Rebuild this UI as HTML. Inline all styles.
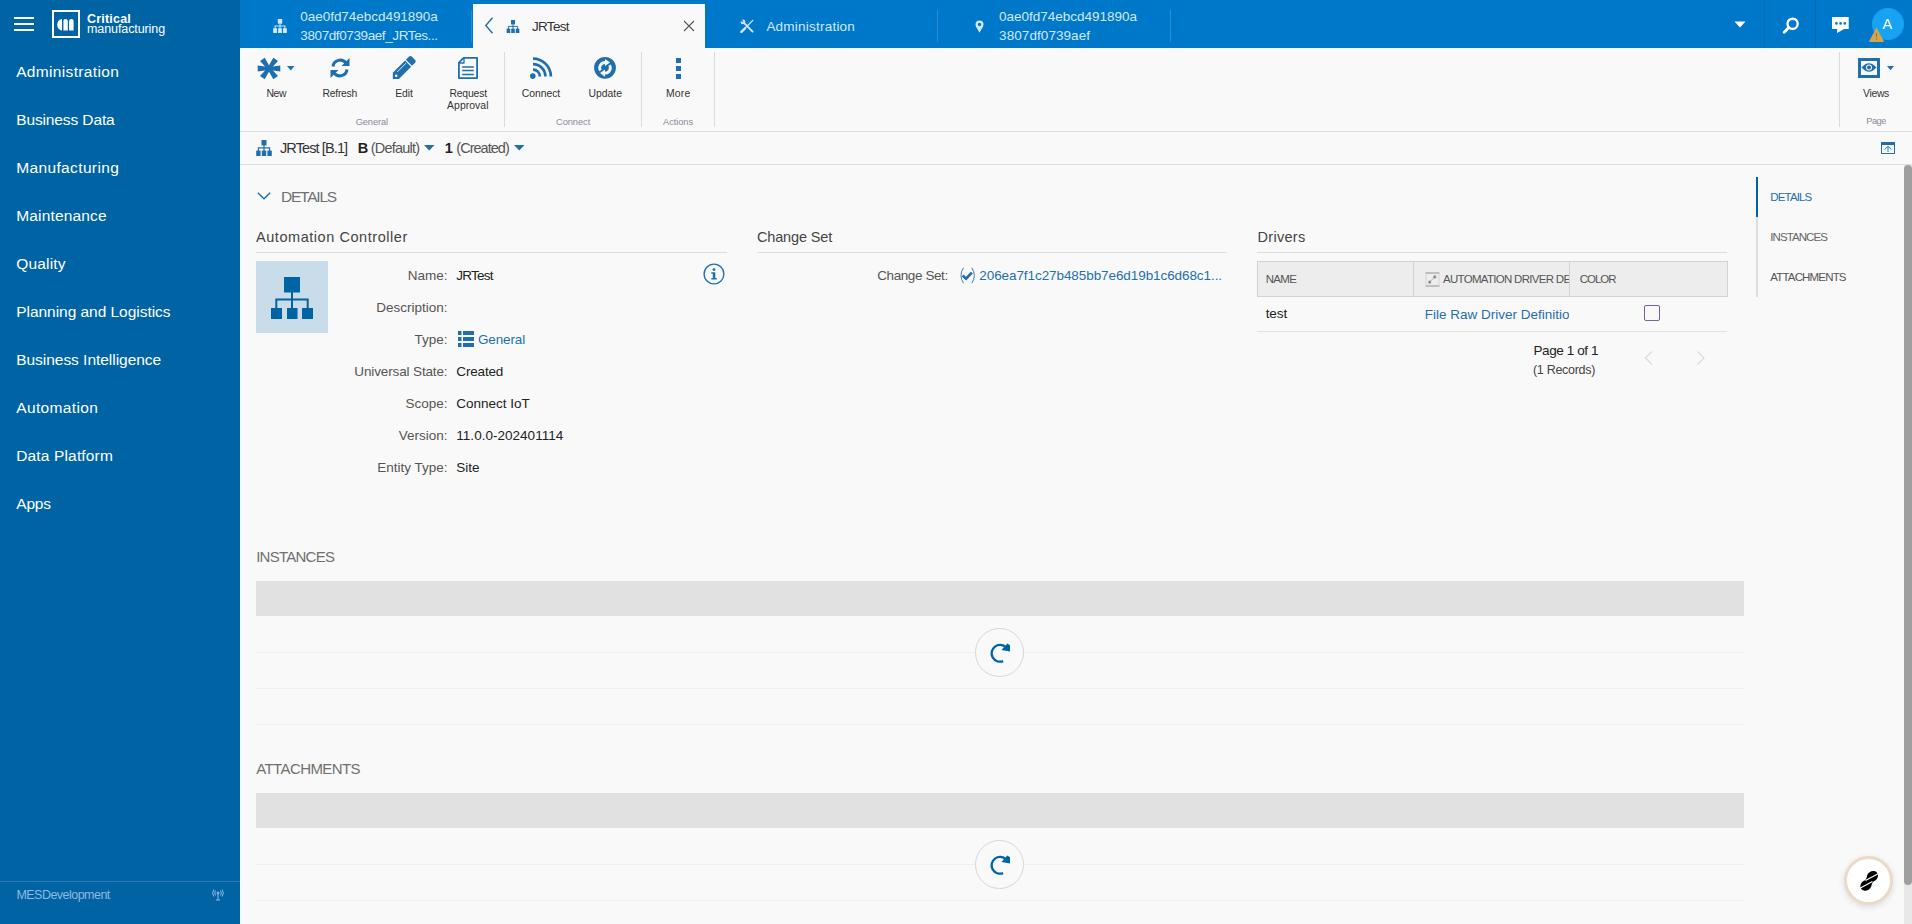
<!DOCTYPE html><html><head><meta charset="utf-8"><style>html,body{margin:0;padding:0;width:1912px;height:924px;overflow:hidden;background:#f9f9f9;font-family:"Liberation Sans",sans-serif;}.t{position:absolute;white-space:nowrap;}</style></head><body><div style="position:absolute;left:0;top:0;width:240px;height:924px;background:#0064a4"></div><div style="position:absolute;left:14px;top:17px;width:20px;height:2px;background:#fff"></div><div style="position:absolute;left:14px;top:23px;width:20px;height:2px;background:#fff"></div><div style="position:absolute;left:14px;top:29px;width:20px;height:2px;background:#fff"></div><div style="position:absolute;left:52px;top:10px;width:24px;height:24px;border:2px solid #fff"></div><svg style="position:absolute;left:57px;top:18.5px" width="17" height="12" viewBox="0 0 17 12"><path d="M5 0 A4.8 5.75 0 0 0 5 11.5 Z" fill="#fff"/><path d="M6.4 11.5 V2 A2.2 2 0 0 1 10.8 2 V11.5 Z" fill="#fff"/><path d="M12.1 11.5 V2 A2.25 2 0 0 1 16.6 2 V11.5 Z" fill="#fff"/></svg><div style="position:absolute;left:0;top:881px;width:240px;height:1px;background:#2a7bb6"></div><svg style="position:absolute;left:212px;top:889px" width="12" height="12" viewBox="0 0 12 12" fill="none" stroke="#8fb9de" stroke-width="1"><path d="M6 4 L6 11 M4 11 L8 11"/><circle cx="6" cy="4" r="1" fill="#8fb9de"/><path d="M3.5 1.5 Q2 4 3.5 6.5 M8.5 1.5 Q10 4 8.5 6.5 M1.8 0.5 Q-0.5 4 1.8 7.5 M10.2 0.5 Q12.5 4 10.2 7.5"/></svg><div style="position:absolute;left:240px;top:0;width:1672px;height:48px;background:#0078c9"></div><svg style="position:absolute;left:273px;top:19px" width="14" height="14" viewBox="0 0 16 16"><rect x="5.5" y="0" width="5" height="5.4" fill="#d2e8f8"/><path d="M8 5 V11 M2.4 11 V7.9 H13.6 V11" stroke="#d2e8f8" stroke-width="1.2" fill="none"/><rect x="0.2" y="10.6" width="4.4" height="5.4" fill="#d2e8f8"/><rect x="5.8" y="10.6" width="4.4" height="5.4" fill="#d2e8f8"/><rect x="11.4" y="10.6" width="4.4" height="5.4" fill="#d2e8f8"/></svg><div style="position:absolute;left:471px;top:10px;width:1px;height:32px;background:#2a8fd2"></div><div style="position:absolute;left:473px;top:4px;width:232px;height:44px;background:#f9f9f9"></div><svg style="position:absolute;left:484px;top:17px" width="10" height="17" viewBox="0 0 10 17"><path d="M8.5 0.8 L1.8 8.5 L8.5 16.2" stroke="#1f6fae" stroke-width="1.4" fill="none"/></svg><svg style="position:absolute;left:506px;top:19.5px" width="14" height="13" viewBox="0 0 16 16"><rect x="5.5" y="0" width="5" height="5.4" fill="#1f6fae"/><path d="M8 5 V11 M2.4 11 V7.9 H13.6 V11" stroke="#1f6fae" stroke-width="1.2" fill="none"/><rect x="0.2" y="10.6" width="4.4" height="5.4" fill="#1f6fae"/><rect x="5.8" y="10.6" width="4.4" height="5.4" fill="#1f6fae"/><rect x="11.4" y="10.6" width="4.4" height="5.4" fill="#1f6fae"/></svg><svg style="position:absolute;left:683px;top:20px" width="12" height="12" viewBox="0 0 12 12"><path d="M1 1 L11 11 M11 1 L1 11" stroke="#555" stroke-width="1.1"/></svg><svg style="position:absolute;left:739.5px;top:19px" width="14" height="14" viewBox="0 0 16 16" fill="none" stroke="#d2e8f8" stroke-linecap="round"><path d="M14.6 1.6 L6 10.2" stroke-width="1.5"/><path d="M5.6 10.6 L1.6 14.6" stroke-width="2.8"/><path d="M4.5 4.5 L14.4 14.4" stroke-width="2.2"/><circle cx="3.4" cy="3.4" r="2.7" fill="#d2e8f8" stroke="none"/><path d="M0.4 0.4 L3.2 3.2" stroke="#0078c9" stroke-width="1.6" stroke-linecap="butt"/></svg><div style="position:absolute;left:937px;top:10px;width:1px;height:32px;background:#2a8fd2"></div><svg style="position:absolute;left:975px;top:19.5px" width="9" height="13" viewBox="0 0 9 13"><path d="M4.5 0.5 A4 4 0 0 1 8.5 4.5 C8.5 7 6 9.5 4.5 12.8 C3 9.5 0.5 7 0.5 4.5 A4 4 0 0 1 4.5 0.5 Z M4.5 2.8 A1.7 1.7 0 1 0 4.5 6.2 A1.7 1.7 0 1 0 4.5 2.8 Z" fill="#d2e8f8" fill-rule="evenodd"/></svg><div style="position:absolute;left:1170px;top:10px;width:1px;height:32px;background:#2a8fd2"></div><svg style="position:absolute;left:1734px;top:21px" width="12" height="7" viewBox="0 0 12 7"><path d="M0.5 0.5 H11.5 L6 6.5 Z" fill="#fff"/></svg><div style="position:absolute;left:1764px;top:0;width:1px;height:48px;background:#0a6bb0"></div><div style="position:absolute;left:1815px;top:0;width:1px;height:48px;background:#0a6bb0"></div><svg style="position:absolute;left:1781px;top:17px" width="19" height="18" viewBox="0 0 19 18" fill="none" stroke="#fff"><circle cx="11.6" cy="6.8" r="5.1" stroke-width="2.4"/><path d="M7.9 10.5 L3.2 15.2" stroke-width="3" stroke-linecap="round"/></svg><svg style="position:absolute;left:1832px;top:17px" width="18" height="17" viewBox="0 0 18 17"><path d="M0 0.1 H16.7 V12 H12.2 L5 15.9 L5.2 12 H0 Z" fill="#fff"/><circle cx="4.4" cy="6.4" r="1.3" fill="#0078c9"/><circle cx="8.6" cy="6.4" r="1.3" fill="#0078c9"/><circle cx="12.8" cy="6.4" r="1.3" fill="#0078c9"/></svg><div style="position:absolute;left:1872px;top:8px;width:32px;height:32px;border-radius:50%;background:#17a3f3"></div><svg style="position:absolute;left:1868.5px;top:28px" width="15" height="14" viewBox="0 0 15 14"><path d="M7.5 0.5 L14.5 13.5 H0.5 Z" fill="#d9a44f" stroke="#d9a44f" stroke-linejoin="round"/><path d="M7.5 5 V9" stroke="#a87424" stroke-width="1.2"/><circle cx="7.5" cy="11" r="0.7" fill="#a87424"/></svg><div style="position:absolute;left:240px;top:131px;width:1672px;height:1px;background:#dedede"></div><div style="position:absolute;left:504px;top:52px;width:1px;height:75px;background:#dcdcdc"></div><div style="position:absolute;left:641px;top:52px;width:1px;height:75px;background:#dcdcdc"></div><div style="position:absolute;left:714px;top:52px;width:1px;height:75px;background:#dcdcdc"></div><div style="position:absolute;left:1839px;top:52px;width:1px;height:75px;background:#dcdcdc"></div><svg style="position:absolute;left:256.5px;top:56.5px" width="24" height="23" viewBox="0 0 24 23"><g transform="translate(12 11.5)" fill="#1f6fae"><path d="M0 -1.5 L11.3 -2.9 L11.3 2.9 L0 1.5 Z M0 -1.5 L-11.3 -2.9 L-11.3 2.9 L0 1.5 Z"/><path transform="rotate(54)" d="M0 -1.5 L11.3 -2.9 L11.3 2.9 L0 1.5 Z M0 -1.5 L-11.3 -2.9 L-11.3 2.9 L0 1.5 Z"/><path transform="rotate(-54)" d="M0 -1.5 L11.3 -2.9 L11.3 2.9 L0 1.5 Z M0 -1.5 L-11.3 -2.9 L-11.3 2.9 L0 1.5 Z"/><circle r="2.6"/></g></svg><svg style="position:absolute;left:286.5px;top:66px" width="8" height="5" viewBox="0 0 8 5"><path d="M0 0 H7.5 L3.75 4.5 Z" fill="#1f6fae"/></svg><svg style="position:absolute;left:330px;top:57px" width="20" height="22" viewBox="0 0 20 22" fill="none" stroke="#1f6fae" stroke-width="3"><path d="M3 9.5 A7.2 7.2 0 0 1 16 6.2"/><path d="M17 12.5 A7.2 7.2 0 0 1 4 15.8"/><path d="M19.5 1 V9 H11.5 Z" fill="#1f6fae" stroke="none"/><path d="M0.5 21 V13 H8.5 Z" fill="#1f6fae" stroke="none"/></svg><svg style="position:absolute;left:388px;top:52px" width="32" height="32" viewBox="0 0 32 32"><g transform="translate(4.8 26.9) rotate(-45)"><path d="M0 0 L4.3 -4.3 H21.6 V4.3 H4.3 Z" fill="#1f6fae"/><path d="M22.8 -4.3 H27.3 Q29.2 -4.3 29.2 -2.4 V2.4 Q29.2 4.3 27.3 4.3 H22.8 Z" fill="#1f6fae"/><path d="M8 -1.8 H20.5" stroke="#f9f9f9" stroke-width="0.8"/><circle cx="4.6" cy="0.2" r="1.3" fill="#f9f9f9"/></g></svg><svg style="position:absolute;left:458px;top:57px" width="20" height="22" viewBox="0 0 20 22" fill="none" stroke="#1f6fae" stroke-width="1.8" stroke-linejoin="round"><path d="M5.6 0.9 H19.1 V21.1 H0.9 V5.6 Z"/><path d="M6 1.2 V6 H1.2" stroke-width="1.3"/><path d="M4.2 10 H15.8 M4.2 13.6 H15.8 M4.2 17.4 H15.8" stroke-width="1.5"/></svg><svg style="position:absolute;left:525px;top:52px" width="30" height="30" viewBox="0 0 30 30" fill="none" stroke="#1f6fae" stroke-width="2.7"><circle cx="7.8" cy="24.1" r="2.8" fill="#1f6fae" stroke="none"/><path d="M8 17.6 A6.9 6.9 0 0 1 14.9 24.5"/><path d="M8 12.1 A12.4 12.4 0 0 1 20.4 24.5"/><path d="M8 6.6 A17.9 17.9 0 0 1 25.9 24.5"/></svg><svg style="position:absolute;left:592px;top:55px" width="26" height="26" viewBox="0 0 26 26"><circle cx="13" cy="12.8" r="10.9" fill="#1f6fae"/><g stroke="#f9f9f9" stroke-width="2.8" fill="none"><path d="M13 7.5 A5.3 5.3 0 0 0 8.4 15.45"/><path d="M13 18.1 A5.3 5.3 0 0 0 17.6 10.15"/></g><path d="M13 3.9 L18 7.5 L13 11.1 Z M13 14.5 L8 18.1 L13 21.7 Z" fill="#f9f9f9"/></svg><div style="position:absolute;left:676px;top:58px;width:4.5px;height:4.5px;background:#1f6fae"></div><div style="position:absolute;left:676px;top:66px;width:4.5px;height:4.5px;background:#1f6fae"></div><div style="position:absolute;left:676px;top:74px;width:4.5px;height:4.5px;background:#1f6fae"></div><div style="position:absolute;left:1857.5px;top:58px;width:16px;height:14px;border:3px solid #1f6fae"></div><svg style="position:absolute;left:1860.5px;top:62px" width="16" height="11" viewBox="0 0 16 11"><path d="M0.5 5.5 Q8 -3 15.5 5.5 Q8 14 0.5 5.5 Z" fill="#1f6fae"/><circle cx="8" cy="5.5" r="3" fill="#f9f9f9"/><circle cx="8" cy="5.5" r="2" fill="#1f6fae"/></svg><svg style="position:absolute;left:1887px;top:66px" width="7" height="4.5" viewBox="0 0 7 4.5"><path d="M0 0 H7 L3.5 4.2 Z" fill="#1f6fae"/></svg><div style="position:absolute;left:240px;top:164px;width:1672px;height:1px;background:#dedede"></div><svg style="position:absolute;left:256px;top:140px" width="16" height="16" viewBox="0 0 16 16"><rect x="5.5" y="0" width="5" height="5.4" fill="#1f6fae"/><path d="M8 5 V11 M2.4 11 V7.9 H13.6 V11" stroke="#1f6fae" stroke-width="1.2" fill="none"/><rect x="0.2" y="10.6" width="4.4" height="5.4" fill="#1f6fae"/><rect x="5.8" y="10.6" width="4.4" height="5.4" fill="#1f6fae"/><rect x="11.4" y="10.6" width="4.4" height="5.4" fill="#1f6fae"/></svg><svg style="position:absolute;left:424px;top:145px" width="11" height="6" viewBox="0 0 11 6"><path d="M0 0 H10.5 L5.25 5.5 Z" fill="#1f6fae"/></svg><svg style="position:absolute;left:513.5px;top:145px" width="11" height="6" viewBox="0 0 11 6"><path d="M0 0 H10.5 L5.25 5.5 Z" fill="#1f6fae"/></svg><svg style="position:absolute;left:1881px;top:142px" width="14" height="12" viewBox="0 0 14 12" fill="none" stroke="#1f6fae"><rect x="0.5" y="0.5" width="13" height="11" stroke-width="1"/><rect x="0.5" y="0.5" width="13" height="2" fill="#1f6fae"/><path d="M7 10 V4.5 M3.6 7.6 L7 4.2 L10.4 7.6" stroke-width="0.9"/></svg><svg style="position:absolute;left:257px;top:192px" width="14" height="8" viewBox="0 0 14 8"><path d="M0.8 0.8 L7 6.8 L13.2 0.8" stroke="#1f6fae" stroke-width="1.4" fill="none"/></svg><div style="position:absolute;left:256px;top:252px;width:471px;height:1px;background:#dcdcdc"></div><div style="position:absolute;left:757px;top:252px;width:470px;height:1px;background:#dcdcdc"></div><div style="position:absolute;left:1257px;top:252px;width:470px;height:1px;background:#dcdcdc"></div><div style="position:absolute;left:256px;top:261px;width:72px;height:72px;background:#c8dce9"></div><svg style="position:absolute;left:271px;top:277px" width="42" height="42" viewBox="0 0 42 42"><rect x="13" y="0" width="16" height="15.5" fill="#0064a4"/><path d="M21 15 V31 M5.3 31 V22.5 H36.7 V31" stroke="#0064a4" stroke-width="2" fill="none"/><rect x="0" y="31" width="11" height="11" fill="#0064a4"/><rect x="16" y="31" width="10.5" height="11" fill="#0064a4"/><rect x="31" y="31" width="11" height="11" fill="#0064a4"/></svg><svg style="position:absolute;left:458px;top:331px" width="16" height="16" viewBox="0 0 16 16" fill="#1f6fae"><rect x="0" y="0" width="3.5" height="4"/><rect x="5" y="0" width="11" height="4"/><rect x="0" y="6" width="3.5" height="4"/><rect x="5" y="6" width="11" height="4"/><rect x="0" y="12" width="3.5" height="4"/><rect x="5" y="12" width="11" height="4"/></svg><svg style="position:absolute;left:703px;top:263px" width="22" height="22" viewBox="0 0 22 22"><circle cx="11" cy="11" r="9.9" stroke="#1f6fae" stroke-width="1.35" fill="none"/><circle cx="11" cy="6.6" r="1.4" fill="#1f6fae"/><path d="M8.3 9.2 H12.3 V15 H13.8 V16.6 H8.3 V15 H9.8 V10.8 H8.3 Z" fill="#1f6fae"/></svg><svg style="position:absolute;left:958.5px;top:266.5px" width="17" height="17" viewBox="0 0 17 17" fill="none" stroke="#1f6fae"><path d="M4.5 0.8 Q-0.6 8.5 4.5 16.2" stroke-width="0.9"/><path d="M12.8 0.8 Q17.9 8.5 12.8 16.2" stroke-width="0.9"/><path d="M3.6 8.6 L7.1 11.7 L12.8 5.6" stroke-width="2.7"/></svg><div style="position:absolute;left:1257px;top:261px;width:469px;height:34px;background:#ededed;border:1px solid #d2d2d2"></div><div style="position:absolute;left:1413px;top:262px;width:1px;height:34px;background:#d2d2d2"></div><div style="position:absolute;left:1569px;top:262px;width:1px;height:34px;background:#d2d2d2"></div><svg style="position:absolute;left:1424.5px;top:271.5px" width="15" height="15" viewBox="0 0 15 15" fill="none"><path d="M0.5 1 H14.5 M0.5 14 H14.5" stroke="#8f8f8f" stroke-width="1"/><path d="M1 1 V14 M14 1 V14" stroke="#cfcfcf" stroke-width="0.8"/><path d="M4.7 10.1 L9.8 4.9" stroke="#9a9aa8" stroke-width="0.7"/><circle cx="4.7" cy="10.1" r="1.6" fill="#8f8f8f"/><circle cx="9.8" cy="4.9" r="1.6" fill="#8f8f8f"/></svg><div style="position:absolute;left:1443px;top:262px;width:126px;height:34px;overflow:hidden"><span style="position:absolute;left:0;top:12px;font-size:11.5px;line-height:11.5px;color:#555;white-space:nowrap;letter-spacing:-0.7px">AUTOMATION DRIVER DEFINITION</span></div><div style="position:absolute;left:1424.7px;top:302px;width:144px;height:24px;overflow:hidden"><span style="position:absolute;left:0;top:6px;font-size:13.5px;line-height:13.5px;color:#1f6fae;white-space:nowrap;letter-spacing:0px">File Raw Driver Definition</span></div><div style="position:absolute;left:1644.3px;top:305.2px;width:13.5px;height:13.5px;border:1px solid #7b6199;border-radius:2px"></div><div style="position:absolute;left:1257px;top:331px;width:470px;height:1px;background:#e2e2e2"></div><svg style="position:absolute;left:1644px;top:351px" width="10" height="14" viewBox="0 0 10 14"><path d="M8 0.5 L1.5 7 L8 13.5" stroke="#d6dee0" stroke-width="1.2" fill="none"/></svg><svg style="position:absolute;left:1695.5px;top:351px" width="10" height="14" viewBox="0 0 10 14"><path d="M1.5 0.5 L8 7 L1.5 13.5" stroke="#d6dee0" stroke-width="1.2" fill="none"/></svg><div style="position:absolute;left:1756px;top:177px;width:2px;height:120px;background:#dedede"></div><div style="position:absolute;left:1756px;top:177px;width:2px;height:40px;background:#0064a4"></div><div style="position:absolute;left:1904px;top:165px;width:8px;height:759px;background:#e8e8e8"></div><div style="position:absolute;left:1904px;top:165px;width:8px;height:720px;background:#9f9f9f;border-radius:4px 4px 4px 4px"></div><div style="position:absolute;left:256px;top:581px;width:1488px;height:35px;background:#e1e1e1"></div><div style="position:absolute;left:256px;top:652px;width:1488px;height:1px;background:#efefef"></div><div style="position:absolute;left:256px;top:688px;width:1488px;height:1px;background:#efefef"></div><div style="position:absolute;left:256px;top:724px;width:1488px;height:1px;background:#efefef"></div><div style="position:absolute;left:975px;top:628px;width:47px;height:47px;border:1px solid #d6d6d6;border-radius:50%;background:#f9f9f9"></div><svg style="position:absolute;left:985px;top:638px" width="30" height="30" viewBox="0 0 30 30"><path d="M21.04 9.46 A8.4 8.4 0 1 0 18.15 23.09" stroke="#0064a4" stroke-width="2.3" fill="none"/><path d="M22.3 5.5 L25 7.2 L25 13.5 L16.5 12 Z" fill="#0064a4"/></svg><div style="position:absolute;left:256px;top:793px;width:1488px;height:35px;background:#e1e1e1"></div><div style="position:absolute;left:256px;top:864px;width:1488px;height:1px;background:#efefef"></div><div style="position:absolute;left:256px;top:900px;width:1488px;height:1px;background:#efefef"></div><div style="position:absolute;left:975px;top:840px;width:47px;height:47px;border:1px solid #d6d6d6;border-radius:50%;background:#f9f9f9"></div><svg style="position:absolute;left:985px;top:850px" width="30" height="30" viewBox="0 0 30 30"><path d="M21.04 9.46 A8.4 8.4 0 1 0 18.15 23.09" stroke="#0064a4" stroke-width="2.3" fill="none"/><path d="M22.3 5.5 L25 7.2 L25 13.5 L16.5 12 Z" fill="#0064a4"/></svg><div style="position:absolute;left:1844px;top:855.5px;width:43px;height:43px;border:3px solid #ecdac8;border-radius:50%;background:#fff;box-shadow:0 2px 6px rgba(0,0,0,0.12)"></div><svg style="position:absolute;left:1855px;top:866px" width="28" height="28" viewBox="0 0 28 28"><ellipse cx="17.4" cy="10.4" rx="6" ry="5" transform="rotate(-35 17.4 10.4)" fill="#000"/><ellipse cx="11" cy="19.4" rx="6" ry="5" transform="rotate(-35 11 19.4)" fill="#000"/><path d="M16.3 11.5 L12.2 18.3" stroke="#000" stroke-width="7.5"/><path d="M10.5 14.6 L23.5 7.6 M4.5 22.4 L17.5 15.4" stroke="#fff" stroke-width="1.1"/></svg><span id="t0" class="t" style="top:13.00px;font-size:12.5px;line-height:12.5px;color:#fff;font-weight:700;letter-spacing:0.201px;;left:87.00px;">Critical</span><span id="t1" class="t" style="top:23.00px;font-size:12.5px;line-height:12.5px;color:#fff;font-weight:400;letter-spacing:-0.094px;;left:87.00px;">manufacturing</span><span id="t2" class="t" style="top:64.00px;font-size:15.5px;line-height:15.5px;color:#fff;font-weight:400;letter-spacing:0.342px;;left:16.20px;">Administration</span><span id="t3" class="t" style="top:112.00px;font-size:15.5px;line-height:15.5px;color:#fff;font-weight:400;letter-spacing:-0.119px;;left:16.20px;">Business Data</span><span id="t4" class="t" style="top:160.00px;font-size:15.5px;line-height:15.5px;color:#fff;font-weight:400;letter-spacing:0.367px;;left:16.20px;">Manufacturing</span><span id="t5" class="t" style="top:208.00px;font-size:15.5px;line-height:15.5px;color:#fff;font-weight:400;letter-spacing:0.167px;;left:16.20px;">Maintenance</span><span id="t6" class="t" style="top:256.00px;font-size:15.5px;line-height:15.5px;color:#fff;font-weight:400;letter-spacing:0.179px;;left:16.20px;">Quality</span><span id="t7" class="t" style="top:304.00px;font-size:15.5px;line-height:15.5px;color:#fff;font-weight:400;letter-spacing:-0.037px;;left:16.20px;">Planning and Logistics</span><span id="t8" class="t" style="top:352.00px;font-size:15.5px;line-height:15.5px;color:#fff;font-weight:400;letter-spacing:-0.030px;;left:16.20px;">Business Intelligence</span><span id="t9" class="t" style="top:400.00px;font-size:15.5px;line-height:15.5px;color:#fff;font-weight:400;letter-spacing:0.368px;;left:16.20px;">Automation</span><span id="t10" class="t" style="top:448.00px;font-size:15.5px;line-height:15.5px;color:#fff;font-weight:400;letter-spacing:0.156px;;left:16.20px;">Data Platform</span><span id="t11" class="t" style="top:496.00px;font-size:15.5px;line-height:15.5px;color:#fff;font-weight:400;letter-spacing:-0.136px;;left:16.20px;">Apps</span><span id="t12" class="t" style="top:889.00px;font-size:12.5px;line-height:12.5px;color:#8fb9de;font-weight:400;letter-spacing:-0.525px;;left:16.40px;">MESDevelopment</span><span id="t13" class="t" style="top:10.00px;font-size:13.5px;line-height:13.5px;color:#d2e8f8;font-weight:400;letter-spacing:-0.039px;;left:300.30px;">0ae0fd74ebcd491890a</span><span id="t14" class="t" style="top:29.00px;font-size:13.5px;line-height:13.5px;color:#d2e8f8;font-weight:400;letter-spacing:-0.397px;;left:300.30px;">3807df0739aef_JRTes...</span><span id="t15" class="t" style="top:20.00px;font-size:13.5px;line-height:13.5px;color:#333;font-weight:400;letter-spacing:-0.703px;;left:532.00px;">JRTest</span><span id="t16" class="t" style="top:20.00px;font-size:13.5px;line-height:13.5px;color:#d2e8f8;font-weight:400;letter-spacing:0.225px;;left:766.40px;">Administration</span><span id="t17" class="t" style="top:10.00px;font-size:13.5px;line-height:13.5px;color:#d2e8f8;font-weight:400;letter-spacing:-0.018px;;left:999.10px;">0ae0fd74ebcd491890a</span><span id="t18" class="t" style="top:29.00px;font-size:13.5px;line-height:13.5px;color:#d2e8f8;font-weight:400;letter-spacing:0.070px;;left:999.10px;">3807df0739aef</span><span id="t19" class="t" style="top:17.00px;font-size:14.5px;line-height:14.5px;color:#fff;font-weight:400;letter-spacing:0.000px;;left:1882.50px;">A</span><span id="t20" class="t" style="top:89.00px;font-size:10.4px;line-height:10.4px;color:#333;font-weight:400;letter-spacing:-0.399px;;left:266.40px;">New</span><span id="t21" class="t" style="top:89.00px;font-size:10.4px;line-height:10.4px;color:#333;font-weight:400;letter-spacing:-0.284px;;left:322.60px;">Refresh</span><span id="t22" class="t" style="top:89.00px;font-size:10.4px;line-height:10.4px;color:#333;font-weight:400;letter-spacing:-0.152px;;left:395.35px;">Edit</span><span id="t23" class="t" style="top:89.00px;font-size:10.4px;line-height:10.4px;color:#333;font-weight:400;letter-spacing:-0.158px;;left:449.40px;">Request</span><span id="t24" class="t" style="top:101.00px;font-size:10.4px;line-height:10.4px;color:#333;font-weight:400;letter-spacing:0.061px;;left:447.05px;">Approval</span><span id="t25" class="t" style="top:118.00px;font-size:9.3px;line-height:9.3px;color:#8d8a9c;font-weight:400;letter-spacing:-0.111px;;left:355.70px;">General</span><span id="t26" class="t" style="top:89.00px;font-size:10.4px;line-height:10.4px;color:#333;font-weight:400;letter-spacing:-0.058px;;left:521.85px;">Connect</span><span id="t27" class="t" style="top:89.00px;font-size:10.4px;line-height:10.4px;color:#333;font-weight:400;letter-spacing:0.014px;;left:588.40px;">Update</span><span id="t28" class="t" style="top:118.00px;font-size:9.3px;line-height:9.3px;color:#8d8a9c;font-weight:400;letter-spacing:-0.063px;;left:556.00px;">Connect</span><span id="t29" class="t" style="top:89.00px;font-size:10.4px;line-height:10.4px;color:#333;font-weight:400;letter-spacing:0.153px;;left:666.05px;">More</span><span id="t30" class="t" style="top:118.00px;font-size:9.3px;line-height:9.3px;color:#8d8a9c;font-weight:400;letter-spacing:-0.071px;;left:663.00px;">Actions</span><span id="t31" class="t" style="top:89.00px;font-size:10.4px;line-height:10.4px;color:#333;font-weight:400;letter-spacing:-0.346px;;left:1863.10px;">Views</span><span id="t32" class="t" style="top:117.00px;font-size:9.3px;line-height:9.3px;color:#8d8a9c;font-weight:400;letter-spacing:-0.480px;;left:1866.20px;">Page</span><span id="t33" class="t" style="top:141.00px;font-size:14.5px;line-height:14.5px;color:#333;font-weight:400;letter-spacing:-0.892px;;left:280.00px;">JRTest [B.1]</span><span id="t34" class="t" style="top:141.00px;font-size:14.5px;line-height:14.5px;color:#222;font-weight:700;letter-spacing:-2.584px;;left:357.70px;">B</span><span id="t35" class="t" style="top:141.00px;font-size:14.5px;line-height:14.5px;color:#555;font-weight:400;letter-spacing:-0.768px;;left:370.70px;">(Default)</span><span id="t36" class="t" style="top:141.00px;font-size:14.5px;line-height:14.5px;color:#222;font-weight:700;letter-spacing:-2.578px;;left:444.80px;">1</span><span id="t37" class="t" style="top:141.00px;font-size:14.5px;line-height:14.5px;color:#555;font-weight:400;letter-spacing:-0.972px;;left:456.30px;">(Created)</span><span id="t38" class="t" style="top:189.00px;font-size:15.5px;line-height:15.5px;color:#707070;font-weight:400;letter-spacing:-1.208px;;left:281.00px;">DETAILS</span><span id="t39" class="t" style="top:230.00px;font-size:14.5px;line-height:14.5px;color:#444;font-weight:400;letter-spacing:0.550px;;left:256.00px;">Automation Controller</span><span id="t40" class="t" style="top:230.00px;font-size:14.5px;line-height:14.5px;color:#444;font-weight:400;letter-spacing:-0.159px;;left:757.00px;">Change Set</span><span id="t41" class="t" style="top:230.00px;font-size:14.5px;line-height:14.5px;color:#444;font-weight:400;letter-spacing:0.297px;;left:1257.50px;">Drivers</span><span id="t42" class="t" style="top:269.00px;font-size:13.5px;line-height:13.5px;color:#555;font-weight:400;letter-spacing:0.000px;;right:1464.40px;">Name:</span><span id="t43" class="t" style="top:269.00px;font-size:13.5px;line-height:13.5px;color:#222;font-weight:400;letter-spacing:-0.753px;;left:456.30px;">JRTest</span><span id="t44" class="t" style="top:301.00px;font-size:13.5px;line-height:13.5px;color:#555;font-weight:400;letter-spacing:0.000px;;right:1464.40px;">Description:</span><span id="t45" class="t" style="top:333.00px;font-size:13.5px;line-height:13.5px;color:#555;font-weight:400;letter-spacing:0.000px;;right:1464.40px;">Type:</span><span id="t46" class="t" style="top:333.00px;font-size:13.5px;line-height:13.5px;color:#1f6fae;font-weight:400;letter-spacing:-0.147px;;left:478.00px;">General</span><span id="t47" class="t" style="top:365.00px;font-size:13.5px;line-height:13.5px;color:#555;font-weight:400;letter-spacing:-0.137px;;right:1464.54px;">Universal State:</span><span id="t48" class="t" style="top:365.00px;font-size:13.5px;line-height:13.5px;color:#222;font-weight:400;letter-spacing:-0.162px;;left:456.30px;">Created</span><span id="t49" class="t" style="top:397.00px;font-size:13.5px;line-height:13.5px;color:#555;font-weight:400;letter-spacing:0.000px;;right:1464.40px;">Scope:</span><span id="t50" class="t" style="top:397.00px;font-size:13.5px;line-height:13.5px;color:#222;font-weight:400;letter-spacing:0.000px;;left:456.30px;">Connect IoT</span><span id="t51" class="t" style="top:429.00px;font-size:13.5px;line-height:13.5px;color:#555;font-weight:400;letter-spacing:0.000px;;right:1464.40px;">Version:</span><span id="t52" class="t" style="top:429.00px;font-size:13.5px;line-height:13.5px;color:#222;font-weight:400;letter-spacing:0.024px;;left:456.30px;">11.0.0-202401114</span><span id="t53" class="t" style="top:461.00px;font-size:13.5px;line-height:13.5px;color:#555;font-weight:400;letter-spacing:0.000px;;right:1464.40px;">Entity Type:</span><span id="t54" class="t" style="top:461.00px;font-size:13.5px;line-height:13.5px;color:#222;font-weight:400;letter-spacing:0.000px;;left:456.30px;">Site</span><span id="t55" class="t" style="top:269.00px;font-size:13.5px;line-height:13.5px;color:#555;font-weight:400;letter-spacing:-0.406px;;right:964.21px;">Change Set:</span><span id="t56" class="t" style="top:269.00px;font-size:13.5px;line-height:13.5px;color:#1f6fae;font-weight:400;letter-spacing:-0.080px;;left:979.30px;">206ea7f1c27b485bb7e6d19b1c6d68c1...</span><span id="t57" class="t" style="top:274.00px;font-size:11.5px;line-height:11.5px;color:#555;font-weight:400;letter-spacing:-0.684px;;left:1265.70px;">NAME</span><span id="t58" class="t" style="top:274.00px;font-size:11.5px;line-height:11.5px;color:#555;font-weight:400;letter-spacing:-1.041px;;left:1579.80px;">COLOR</span><span id="t59" class="t" style="top:307.00px;font-size:13.5px;line-height:13.5px;color:#222;font-weight:400;letter-spacing:-0.066px;;left:1265.70px;">test</span><span id="t60" class="t" style="top:344.00px;font-size:13.5px;line-height:13.5px;color:#222;font-weight:400;letter-spacing:-0.397px;;left:1533.50px;">Page 1 of 1</span><span id="t61" class="t" style="top:364.00px;font-size:12.5px;line-height:12.5px;color:#444;font-weight:400;letter-spacing:-0.300px;;left:1533.00px;">(1 Records)</span><span id="t62" class="t" style="top:192.00px;font-size:11.5px;line-height:11.5px;color:#1f6fae;font-weight:400;letter-spacing:-0.854px;;left:1770.30px;">DETAILS</span><span id="t63" class="t" style="top:232.00px;font-size:11.5px;line-height:11.5px;color:#666;font-weight:400;letter-spacing:-0.919px;;left:1770.30px;">INSTANCES</span><span id="t64" class="t" style="top:272.00px;font-size:11.5px;line-height:11.5px;color:#555;font-weight:400;letter-spacing:-0.832px;;left:1770.30px;">ATTACHMENTS</span><span id="t65" class="t" style="top:549.00px;font-size:15px;line-height:15px;color:#707070;font-weight:400;letter-spacing:-0.748px;;left:256.20px;">INSTANCES</span><span id="t66" class="t" style="top:761.00px;font-size:15px;line-height:15px;color:#707070;font-weight:400;letter-spacing:-0.589px;;left:256.20px;">ATTACHMENTS</span></body></html>
